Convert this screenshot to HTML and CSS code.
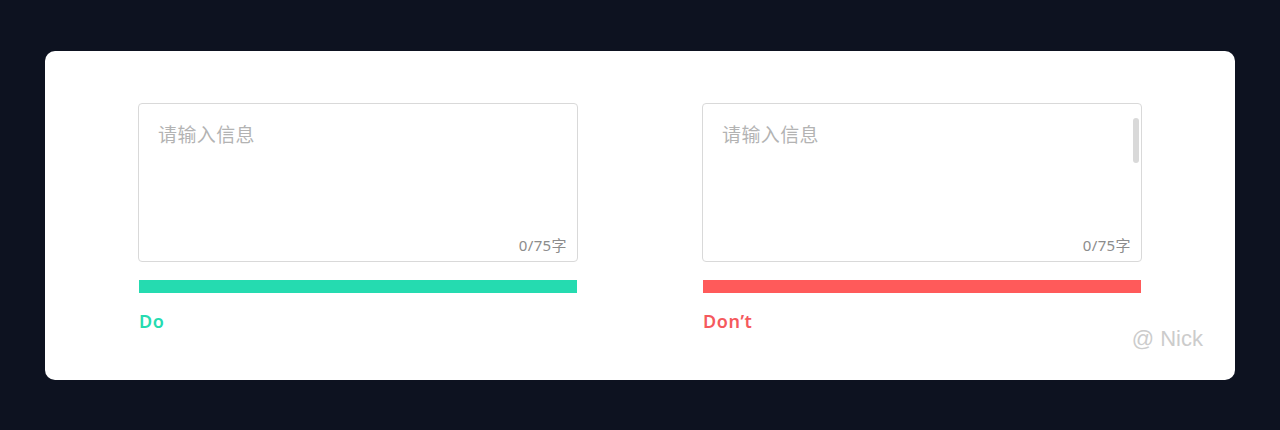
FILE: index.html
```html
<!DOCTYPE html>
<html lang="zh-CN">
<head>
<meta charset="utf-8">
<link rel="stylesheet" href="styles.css">
</head>
<body>
<div class="card">
  <div class="col">
    <div class="field">
      <div class="placeholder">请输入信息</div>
      <div class="count">0/75字</div>
    </div>
    <div class="bar bar-do"></div>
    <div class="label label-do">Do</div>
  </div>
  <div class="col">
    <div class="field">
      <div class="placeholder">请输入信息</div>
      <div class="scroll"></div>
      <div class="count">0/75字</div>
    </div>
    <div class="bar bar-dont"></div>
    <div class="label label-dont">Don’t</div>
  </div>
  <div class="sign">@ Nick</div>
</div>
</body>
</html>
```
FILE: styles.css
```css
html, body {
  margin: 0;
  padding: 0;
  background: #0d1220;
}
body {
  width: 1280px;
  height: 430px;
  padding: 51px 45px 0 45px;
  box-sizing: border-box;
  font-family: "Noto Sans CJK SC", "Noto Sans", sans-serif;
}
.card {
  position: relative;
  width: 1190px;
  height: 329px;
  background: #ffffff;
  border-radius: 10px;
  box-sizing: border-box;
  padding: 52px 93px 0 93px;
  display: flex;
  gap: 124px;
}
.col {
  width: 440px;
  display: flex;
  flex-direction: column;
}
.field {
  position: relative;
  height: 159px;
  border: 1px solid #d9d9d9;
  border-radius: 4px;
  box-sizing: border-box;
}
.placeholder {
  position: absolute;
  left: 19px;
  top: 16px;
  font-size: 19px;
  letter-spacing: 0.4px;
  line-height: 28px;
  color: #b3b3b3;
}
.count {
  position: absolute;
  right: 10px;
  bottom: 6px;
  font-family: "Noto Sans", "Noto Sans CJK SC", sans-serif;
  font-size: 15px;
  letter-spacing: 0.4px;
  line-height: 20px;
  color: #8c8c8c;
}
.scroll {
  position: absolute;
  right: 2px;
  top: 14px;
  width: 6px;
  height: 45px;
  border-radius: 3px;
  background: #d9d9d9;
}
.bar {
  margin-top: 18px;
  margin-left: 1px;
  margin-right: 1px;
  height: 13px;
}
.bar-do { background: #25dbb0; }
.bar-dont { background: #ff5a5a; }
.label {
  margin-top: 15px;
  margin-left: 1px;
  font-size: 18px;
  letter-spacing: 0.6px;
  line-height: 26px;
  font-weight: 600;
  font-family: "Noto Sans", sans-serif;
}
.label-do { color: #25dbb0; }
.label-dont { color: #f5595d; }
.sign {
  position: absolute;
  right: 32px;
  top: 275px;
  font-family: "Liberation Sans", Arial, sans-serif;
  font-size: 22px;
  line-height: 26px;
  color: #cccccc;
}
```
